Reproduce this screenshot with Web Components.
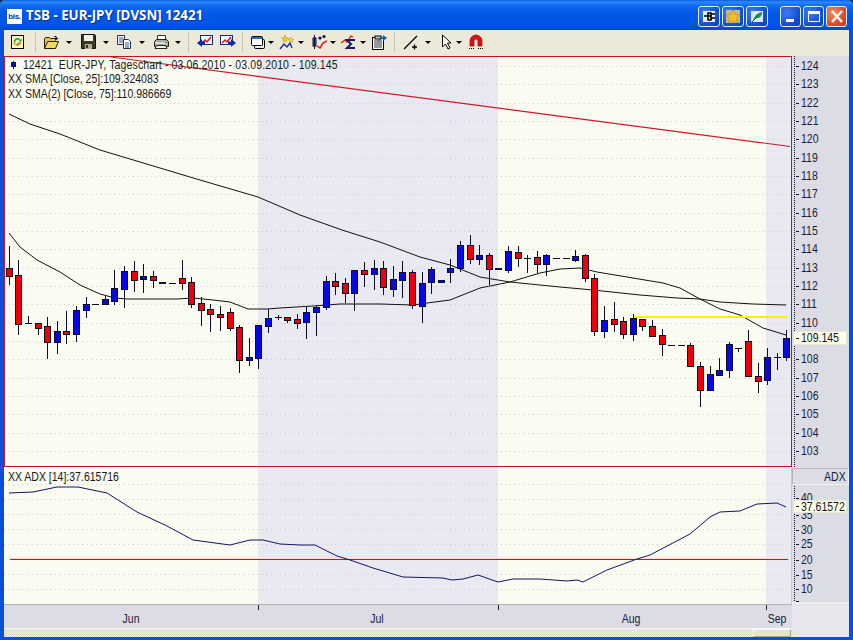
<!DOCTYPE html>
<html lang="de">
<head>
<meta charset="utf-8">
<title>TSB - EUR-JPY</title>
<style>
html,body{margin:0;padding:0;background:#1c2a44;height:100%;overflow:hidden}
</style>
</head>
<body>
<xp-window>
  <title-bar slot="title">
    <span slot="logo">bis.</span>
    TSB - EUR-JPY [DVSN] 12421
  </title-bar>
  <tool-bar slot="tools">
    <tool-btn icon="refresh" style="margin-left:5px"></tool-btn>
    <tool-sep style="margin-left:9px"></tool-sep>
    <tool-btn icon="folder" w="18" style="margin-left:7px"></tool-btn>
    <tool-caret style="margin-left:5px"></tool-caret>
    <tool-btn icon="save" w="15" style="margin-left:9px"></tool-btn>
    <tool-caret style="margin-left:7px"></tool-caret>
    <tool-btn icon="copy" style="margin-left:7px"></tool-btn>
    <tool-caret style="margin-left:7px"></tool-caret>
    <tool-btn icon="print" style="margin-left:8px"></tool-btn>
    <tool-caret style="margin-left:6px"></tool-caret>
    <tool-sep style="margin-left:7px"></tool-sep>
    <tool-btn icon="chartl" style="margin-left:8px"></tool-btn>
    <tool-btn icon="chartr" style="margin-left:7px"></tool-btn>
    <tool-sep style="margin-left:6px"></tool-sep>
    <tool-btn icon="win" style="margin-left:7px"></tool-btn>
    <tool-caret style="margin-left:2px"></tool-caret>
    <tool-btn icon="stars" style="margin-left:5px"></tool-btn>
    <tool-caret style="margin-left:3px"></tool-caret>
    <tool-btn icon="candles" style="margin-left:7px"></tool-btn>
    <tool-caret style="margin-left:3px"></tool-caret>
    <tool-btn icon="sigma" style="margin-left:5px"></tool-btn>
    <tool-caret style="margin-left:3px"></tool-caret>
    <tool-btn icon="notes" style="margin-left:5px"></tool-btn>
    <tool-sep style="margin-left:7px"></tool-sep>
    <tool-btn icon="line" style="margin-left:8px"></tool-btn>
    <tool-caret style="margin-left:6px"></tool-caret>
    <tool-btn icon="cursor" w="12" style="margin-left:10px"></tool-btn>
    <tool-caret style="margin-left:3px"></tool-caret>
    <tool-btn icon="magnet" style="margin-left:6px"></tool-btn>
  </tool-bar>
  <price-pane slot="main">
    <div class="first">12421  EUR-JPY, Tageschart - 03.06.2010 - 03.09.2010 - 109.145</div>
    <div>XX SMA [Close, 25]:109.324083</div>
    <div>XX SMA(2) [Close, 75]:110.986669</div>
  </price-pane>
  <price-axis slot="axis"></price-axis>
  <adx-pane slot="adx"><div>XX ADX [14]:37.615716</div></adx-pane>
  <adx-axis slot="adxaxis"></adx-axis>
  <time-axis slot="time"></time-axis>
  <h-scroll slot="scroll"></h-scroll>
</xp-window>

<script>
const FONT = '"Liberation Sans",Arial,sans-serif';
const BG = '#fbfcf1', SHADE = '#e9e9f1', AXIS = '#dcdce4', INK = '#1a1a40', SX = .875;
const shell = (el, html) => { el.attachShadow({mode:'open'}).innerHTML = html; };

/* Price data: wick top, wick bottom, body top, body bottom, colour (pixel rows of the chart) */
const C = [
[246,285,268,276,'r'],[260,335,275,324,'r'],[316,324,323,323,'l'],[323,335,323,328,'r'],[317,359,326,342,'r'],
[321,354,331,342,'b'],[311,344,331,334,'r'],[306,342,310,334,'b'],[297,318,304,310,'b'],[304,304,304,304,'l'],
[296,304,299,304,'b'],[270,305,288,301,'b'],[266,308,271,289,'b'],[261,292,271,280,'r'],[264,293,276,279,'b'],
[271,288,276,280,'r'],[282,283,282,283,'t'],[283,283,283,283,'l'],[260,290,278,283,'r'],[277,308,282,304,'r'],
[297,326,303,310,'r'],[304,332,309,314,'r'],[306,331,314,317,'r'],[308,331,312,328,'r'],[325,373,327,360,'r'],
[338,366,357,360,'b'],[325,369,325,358,'b'],[309,333,318,326,'b'],[315,320,317,317,'l'],[317,323,317,320,'r'],
[314,329,319,323,'r'],[306,339,312,322,'b'],[306,336,307,312,'b'],[276,310,281,307,'b'],[273,295,281,286,'r'],
[278,303,283,293,'r'],[270,311,270,293,'b'],[262,287,270,274,'r'],[260,290,268,274,'b'],[261,295,268,287,'r'],
[266,297,279,289,'b'],[261,298,272,280,'b'],[270,309,272,305,'r'],[272,323,283,306,'b'],[267,294,269,282,'b'],
[280,282,280,282,'b'],[259,283,268,272,'b'],[241,272,245,268,'b'],[235,264,245,259,'r'],[245,265,255,259,'b'],
[253,285,255,269,'r'],[268,269,268,269,'t'],[246,273,251,270,'b'],[246,267,252,258,'r'],[255,273,258,258,'l'],
[251,273,257,264,'r'],[254,276,255,264,'b'],[258,258,258,258,'l'],[258,258,258,258,'l'],[250,262,256,260,'b'],
[254,282,255,278,'r'],[274,336,278,331,'r'],[306,338,320,331,'b'],[302,332,319,324,'r'],[317,339,321,334,'r'],
[314,341,318,334,'b'],[319,331,319,326,'r'],[320,337,326,336,'r'],[329,356,335,344,'r'],[345,345,345,345,'l'],
[345,345,345,345,'l'],[343,367,345,366,'r'],[362,407,366,390,'r'],[366,391,374,390,'b'],[358,376,370,375,'b'],
[342,378,344,370,'b'],[348,352,348,348,'l'],[330,377,341,376,'r'],[363,393,376,381,'r'],[348,385,357,380,'b'],
[353,370,357,357,'l'],[330,361,338,357,'b']];
const SMA25 = [[9,233],[20,247],[37,260],[60,272],[80,285],[100,294],[115,298],[128,299],[140,299],[177,299],[193,298],[213,300],[230,302],[248,309],[267,309],[280,308],[313,306],[340,304],[380,304],[413,305],[427,303],[450,300],[480,288],[510,282],[540,273],[560,269],[580,268],[597,272],[633,278],[663,283],[680,288],[700,299],[720,309],[740,315],[763,328],[786,335]];
const SMA75 = [[9,114],[30,124],[60,134],[100,150],[150,165],[200,180],[258,197],[300,215],[342,230],[380,242],[420,257],[450,265],[480,277],[510,282],[560,287],[593,290],[640,295],[677,298],[700,299],[720,302],[753,304],[786,305]];
const ADX = [[9,493],[33,492],[57,487],[78,487],[107,493],[137,512],[167,526],[193,540],[230,545],[250,540],[263,540],[280,544],[300,545],[315,545],[337,556],[350,560],[373,568],[403,577],[443,578],[452,580],[463,579],[478,575],[498,582],[513,579],[540,579],[567,581],[577,580],[583,582],[607,570],[637,559],[650,555],[690,534],[710,517],[720,512],[740,511],[757,504],[777,503],[786,507]];
const pts = a => a.map(p => p.join(',')).join(' ');
const bands = (y, h) => `<rect x="258" y="${y}" width="240" height="${h}" fill="${SHADE}"/><rect x="766" y="${y}" width="26" height="${h}" fill="${SHADE}"/>`;
const dots = (y, x2=792) => `<line x1="4" x2="${x2}" y1="${y}.5" y2="${y}.5" stroke="#c9c9c2" stroke-dasharray="1 3.6"/>`;
const label = (x, y, t, anchor='start') => `<text transform="translate(${x} ${y}) scale(${SX} 1)" text-anchor="${anchor}">${t}</text>`;

function candles(){
  let s = '';
  C.forEach((c,i) => {
    const x = Math.floor(9.3 + 9.6*i), [wt,wb,bt,bb,k] = c, ink = '#0c0c24';
    if (wb > wt) s += `<rect x="${x}" y="${wt}" width="1" height="${wb-wt}" fill="${ink}"/>`;
    if (k === 'l') s += `<rect x="${x-3}" y="${bt}" width="7" height="1" fill="${ink}"/>`;
    else if (k === 't') s += `<rect x="${x-3}" y="${bt}" width="7" height="2" fill="#101040"/>`;
    else s += `<rect x="${x-3}" y="${bt}" width="7" height="${bb-bt+1}" fill="${ink}"/><rect x="${x-2}" y="${bt+1}" width="5" height="${Math.max(bb-bt-1,0)}" fill="${k==='r'?'#ee0008':'#0808e0'}"/>`;
  });
  return s;
}

class XpWindow extends HTMLElement{constructor(){super();shell(this,`<style>
:host{display:grid;box-sizing:border-box;width:853px;height:640px;grid-template-columns:788px 57px;grid-template-rows:30px 26px 411px 137px 24px 9px;
padding:0 4px 3px 4px;background:#0a4fd8;border-radius:5px 5px 0 0;overflow:hidden;font-family:${FONT}}
.t{grid-column:1/3;margin:0 -4px}.b{grid-column:1/3}
.r{grid-column:2;grid-row:5/7;background:#e6e6ec}
</style>
<div class="t"><slot name="title"></slot></div>
<div class="b"><slot name="tools"></slot></div>
<slot name="main"></slot><slot name="axis"></slot>
<slot name="adx"></slot><slot name="adxaxis"></slot>
<slot name="time"></slot><div class="r"></div>
<slot name="scroll"></slot>`);}}

class TitleBar extends HTMLElement{constructor(){super();
shell(this,`<style>
:host{display:flex;align-items:center;height:30px;padding:2px 6px 0 7px;box-sizing:border-box;
background:linear-gradient(#0d5fe4 0,#2b8af6 2px,#0f68ee 6px,#0058e6 45%,#0056e0 85%,#0048c8 100%);
color:#fff;font:bold 13.300px/1 "Open Sans","Liberation Sans",sans-serif;text-shadow:1px 1px 0 #0a2f9c}
.logo{width:15px;height:15px;background:#fff;margin-right:4px;color:#1030a0;font:bold 8px/15px ${FONT};text-align:center;text-shadow:none;letter-spacing:-.3px;overflow:hidden}
.txt{flex:1;white-space:nowrap}
.cb{box-sizing:border-box;display:flex;align-items:center;justify-content:center;width:21px;height:21px;border:1px solid #e4ecff;border-radius:3px;background:radial-gradient(circle at 30% 30%,#3f7df4,#0c48d0 75%);margin-left:2px}
.cu{width:22px}
.cb svg{width:18px;height:17px;display:block}
.gap{margin-left:12px}
.close{background:radial-gradient(circle at 30% 30%,#ee8a60,#d8401c 75%)}
</style>
<span class="logo"><slot name="logo"></slot></span><span class="txt"><slot></slot></span>
<span class="cb cu"><svg viewBox="0 0 18 17"><rect x="3" y="3" width="12" height="11" fill="#e8eefc"/><path d="M4 8h4M8 5v7h3V5zM11 6h4M11 10h4M8 8h3" stroke="#000" stroke-width="1.6" fill="none"/></svg></span>
<span class="cb cu"><svg viewBox="0 0 18 17"><rect x="2" y="2" width="14" height="13" fill="#c4b888"/><path d="M9 2l2.2 4.4 4.8.6-3.5 3.3.9 4.7L9 12.7 4.600 15l.9-4.700L2 7l4.800-.6z" fill="#f4c020" stroke="#b88010" stroke-width=".6"/></svg></span>
<span class="cb cu"><svg viewBox="0 0 18 17"><rect x="3" y="3" width="12" height="11" fill="#dce8fa"/><path d="M5 13C6 8 9 5 14 4c0 4-2 6-5 6l-2 1z" fill="#1c8c48"/><path d="M4 14l5-5" stroke="#063" /></svg></span>
<span class="cb gap"><svg viewBox="0 0 18 17"><rect x="4" y="11" width="8" height="3" fill="#fff"/></svg></span>
<span class="cb"><svg viewBox="0 0 18 17"><rect x="3.500" y="3.500" width="11" height="10" fill="none" stroke="#fff"/><rect x="3" y="3" width="12" height="3" fill="#fff"/></svg></span>
<span class="cb close"><svg viewBox="0 0 18 17"><path d="M4 3l10 11M14 3L4 14" stroke="#fff" stroke-width="2.400"/></svg></span>`);
}}

class ToolBar extends HTMLElement{constructor(){super();shell(this,`<style>
:host{display:flex;align-items:center;height:26px;background:#ece9d8;box-sizing:border-box;padding:0 0 2px 1px}
</style><slot></slot>`);}}

const ICONS = {
refresh:`<rect x="1.500" y="1.500" width="12" height="13" fill="#fdf8c0" stroke="#000"/><path d="M4.500 8a3 3 0 0 1 5-2.400" stroke="#109030" stroke-width="1.500" fill="none"/><path d="M8.500 7.500h3v-3zM10.500 8a3 3 0 0 1-5 2.400" fill="#109030"/><path d="M10.500 8a3 3 0 0 1-5 2.400" stroke="#d0a020" stroke-width="1.500" fill="none"/><path d="M6.500 8.500h-3v3z" fill="#d0a020"/>`,
folder:`<path d="M1.500 14.500v-10l1-1h4l1 1h5v2" fill="#e8c450" stroke="#202000"/><path d="M1.500 14.500l3-7h11l-3 7z" fill="#f4d668" stroke="#202000"/><path d="M10 3c2-2 4-1 4 1l1.500 0-2 2-2-2h1.200c0-1-1-1.500-2.700-1z" fill="#000"/>`,
save:`<path d="M.5 .5h13l1 1v13H.5z" fill="#3a3a22" stroke="#101008"/><rect x="3" y="1" width="9" height="6" fill="#f4f2e6"/><rect x="4" y="10" width="7" height="5" fill="#b0ae9a"/><rect x="5" y="11" width="2" height="3" fill="#303020"/>`,
copy:`<path d="M1.500 1.500h7v9h-7z" fill="#f6f8fc" stroke="#203050"/><path d="M3 4h4M3 6h4M3 8h4" stroke="#405080"/><path d="M7.500 5.500h5l2 2v7h-7z" fill="#fff" stroke="#203050"/><path d="M9 9h4M9 11h4M9 13h4" stroke="#3050a0"/>`,
print:`<path d="M4.500 1.500h8v5h-8z" fill="#fff" stroke="#303030"/><path d="M1.500 7.500l2-2h10l2 2v5h-14z" fill="#a8a8a0" stroke="#202020"/><path d="M2 9h12" stroke="#e8e8e0" stroke-width="1.500"/><path d="M3.500 11.500h9l1.500 3h-12z" fill="#f4f4f0" stroke="#202020"/><rect x="12" y="8" width="2" height="1" fill="#30a030"/>`,
chartl:`<rect x="3.500" y="1.500" width="12" height="9" fill="#fff" stroke="#102c80"/><path d="M5 9l3-3 2 2 4-5" stroke="#e01010" stroke-width="1.500" fill="none"/><path d="M0 9l5-4v2.500h3v3H5V13z" fill="#0a2cb0"/>`,
chartr:`<rect x=".5" y="1.500" width="12" height="9" fill="#fff" stroke="#102c80"/><path d="M2 9l3-3 2 2 4-5" stroke="#e01010" stroke-width="1.500" fill="none"/><path d="M16 9l-5-4v2.500H8v3h3V13z" fill="#0a2cb0"/>`,
win:`<rect x="4.500" y="5.500" width="10" height="9" rx="1" fill="#e8e8e4" stroke="#000"/><rect x="1.500" y="2.500" width="11" height="9" rx="1" fill="#fff" stroke="#000"/><rect x="2" y="3" width="10" height="2" fill="#2c6ccc"/>`,
stars:`<path d="M6 1l1 2.500 2.500.5-2 1.500.5 2.500-2-1.200L4 8l.5-2.500-2-1.500L5 3.500z" fill="#f0d020" stroke="#a89010" stroke-width=".5"/><path d="M12 3l.8 2 2 .3-1.500 1.200.4 2-1.700-1-1.700 1 .4-2L9 5.300l2-.3z" fill="#f4e060" stroke="#a89010" stroke-width=".5"/><path d="M1 15l4-5 3 3 3-4 2 5" stroke="#1020a0" stroke-width="1.300" fill="none"/>`,
candles:`<rect x="2" y="4" width="3" height="8" fill="#c04040" stroke="#101040"/><path d="M3.500 1v14" stroke="#101040"/><circle cx="9" cy="4" r="1.600" fill="#101040"/><circle cx="13" cy="2.500" r="1.600" fill="#101040"/><path d="M6 12l3 2 3-5 4-2" stroke="#e01818" stroke-width="1.500" fill="none"/>`,
sigma:`<path d="M0 9l4-3 2 2 4-6 2 1" stroke="#e01010" stroke-width="1.300" fill="none"/><path d="M14 6H6l4 4-4 4h8" stroke="#102060" stroke-width="2" fill="none"/>`,
notes:`<rect x="1.500" y="3.500" width="11" height="12" fill="#fff" stroke="#000"/><rect x="4" y="2" width="6" height="3" fill="#d0d0c0" stroke="#000"/><path d="M3 7h8M3 9h8M3 11h8M3 13h8" stroke="#303030"/><path d="M7 8c0-4 3-5 5-5V1l4 3-4 3V5c-2 0-4 1-5 3z" fill="#1060b0"/>`,
line:`<path d="M1 15L14 2" stroke="#000" stroke-width="1.200"/><path d="M9 13h5M11.500 10.500v5" stroke="#000" stroke-width="1.300"/>`,
cursor:`<path d="M1.500 1v12l3-3 2.500 5 2-1-2.500-5H10z" fill="#fff" stroke="#000"/>`,
magnet:`<path d="M2 12V7a6 6 0 0 1 12 0v5h-4V7a2 2 0 0 0-4 0v5z" fill="#e01010" stroke="#800808" stroke-width=".7"/><path d="M1 14.500h5M10 14.500h5" stroke="#000" stroke-dasharray="1 1"/>`
};
class ToolBtn extends HTMLElement{constructor(){super();
const w=this.getAttribute('w')||16, name=this.getAttribute('icon');
shell(this,`<style>:host{display:block;flex:none;width:${w}px;height:16px}svg{display:block;width:100%;height:100%}</style>
<svg viewBox="0 0 ${w} 16">${ICONS[name]||''}</svg>`);}}
class ToolCaret extends HTMLElement{constructor(){super();shell(this,`<style>:host{display:block;flex:none;width:0;height:0;border:3px solid transparent;border-top:3px solid #000;border-bottom:0;margin-top:1px}</style>`);}}
class ToolSep extends HTMLElement{constructor(){super();shell(this,`<style>:host{display:block;flex:none;width:1px;height:20px;background:#c4c1b0}</style>`);}}

class PricePane extends HTMLElement{constructor(){super();
let g='';for(let k=0;k<22;k++)g+=dots(Math.round(66+k*18.33));
shell(this,`<style>
:host{display:block;position:relative;width:788px;height:411px;box-sizing:border-box;overflow:hidden;background:${BG}}
svg{position:absolute;inset:0;display:block}
.leg{position:absolute;left:4px;top:2px;font:12px/14.300px ${FONT};color:#181818;transform:scaleX(${SX});transform-origin:0 0}
::slotted(div){height:14.300px;white-space:nowrap}
::slotted(.first){padding-left:17px;white-space:pre;letter-spacing:.15px}
.f{position:absolute;inset:0;border:1px solid #d0101c;box-sizing:border-box}
</style>
<svg width="788" height="411" viewBox="4 56 788 411">
${bands(56,411)}${g}
<polyline points="${pts(SMA75)}" fill="none" stroke="#111"/>
<polyline points="${pts(SMA25)}" fill="none" stroke="#111"/>
<g shape-rendering="crispEdges">${candles()}
<rect x="634" y="316" width="153" height="2" fill="#fff000"/></g>
<polyline points="111,57 790,146.500" fill="none" stroke="#d01828" stroke-width="1.100"/>
<g shape-rendering="crispEdges"><rect x="13" y="61" width="1" height="8" fill="#101050"/><rect x="11" y="62" width="5" height="5" fill="#101080"/><rect x="423" y="56" width="5" height="1" fill="#201010"/></g>
</svg>
<div class="leg"><slot></slot></div><div class="f"></div>`);
}}

class AdxPane extends HTMLElement{constructor(){super();
let g='';for(let k=0;k<8;k++){const y=484+k*15; if(y!==559) g+=dots(y,790);}
shell(this,`<style>
:host{display:block;position:relative;width:788px;height:137px;overflow:hidden;background:${BG}}
svg{position:absolute;inset:0;display:block}
.leg{position:absolute;left:4px;top:3px;font:12px/14px ${FONT};color:#181818;white-space:nowrap;transform:scaleX(${SX});transform-origin:0 0}
.s{position:absolute;right:0;top:0;bottom:0;width:1px;background:#c8c8d0}
</style>
<svg width="788" height="137" viewBox="4 467 788 137">
${bands(467,137)}${g}
<g shape-rendering="crispEdges"><rect x="10" y="558" width="778" height="1" fill="#f6dcdc"/><rect x="10" y="559" width="778" height="1" fill="#f00010"/></g>
<polyline points="${pts(ADX)}" fill="none" stroke="#141460"/>
</svg><div class="leg"><slot></slot></div><div class="s"></div>`);}}

const axisText=(y,t)=>`<rect x="4" y="${y}" width="3" height="1" fill="#101030"/>${label(9,y+4,t)}`;
const TAG=`position:absolute;left:1px;width:54px;box-sizing:border-box;background:#ffffe6;border:1px solid #e8e8d8;color:#101028;font:12px ${FONT};display:flex;align-items:center;padding-left:2px;overflow:hidden`;
class PriceAxis extends HTMLElement{constructor(){super();
let s='';for(let p=124;p>=103;p--){s+=axisText(Math.round(10+(124-p)*18.33),p);}
shell(this,`<style>
:host{display:block;position:relative;width:57px;height:411px;background:${AXIS};overflow:hidden}
svg{position:absolute;inset:0;display:block;font:12px ${FONT};fill:${INK}}
.tag{${TAG};top:275px;height:14px}
.tag i{flex:none;width:3px;height:1px;background:#101028;margin-right:2px}
.tag span{display:block;transform:scaleX(${SX});transform-origin:0 50%;white-space:nowrap}
</style>
<svg width="57" height="411"><line x1="2.500" x2="2.500" y1="0" y2="411" stroke="#101030" stroke-dasharray="1 1"/>${s}</svg>
<div class="tag"><i></i><span>109.145</span></div>`);}}

class AdxAxis extends HTMLElement{constructor(){super();
const L=[[40,31],[35,48],[30,63],[25,77],[20,93],[15,108],[10,122]];
let s='';L.forEach(([v,y])=>s+=axisText(y,v));
shell(this,`<style>
:host{display:block;position:relative;width:57px;height:137px;background:${AXIS};overflow:hidden}
.box{height:17px;margin-top:1px;box-sizing:border-box;border:1px solid #b8b8c0;border-right-color:#eee;border-bottom-color:#f2f2f6;font:12px/16px ${FONT};color:${INK};text-align:right;padding-right:2px}
.box span{display:inline-block;transform:scaleX(${SX});transform-origin:100% 50%}
svg{position:absolute;left:0;top:0;display:block;font:12px ${FONT};fill:${INK}}
.w{position:absolute;left:0;right:0;top:135px;height:2px;background:#eeeef2}
.tag{${TAG};top:33px;height:13px}
.tag i{flex:none;width:3px;height:1px;background:#101028;margin-right:2px}
.tag span{display:block;transform:scaleX(${SX});transform-origin:0 50%;white-space:nowrap}
</style>
<svg width="57" height="137"><line x1="2.500" x2="2.500" y1="19" y2="135" stroke="#101030" stroke-dasharray="1 1"/><rect x="4" y="134" width="3" height="1" fill="#101030"/>${s}</svg>
<div class="box"><span>ADX</span></div><div class="w"></div>
<div class="tag"><i></i><span>37.61572</span></div>`);}}

class TimeAxis extends HTMLElement{constructor(){super();
const lab=[['Jun',131],['Jul',377],['Aug',631],['Sep',777]];
shell(this,`<style>
:host{display:block;position:relative;width:788px;height:24px;background:${AXIS};border-top:1px solid #b4b4b4;box-sizing:border-box}
svg{display:block;font:12px ${FONT};fill:${INK}}
</style>
<svg width="788" height="23" viewBox="4 605 788 23">
<g shape-rendering="crispEdges" fill="#202030"><rect x="258" y="605" width="1" height="5"/><rect x="498" y="605" width="1" height="5"/><rect x="766" y="605" width="1" height="5"/></g>
${lab.map(([t,x])=>label(x,623,t,'middle')).join('')}
</svg>`);}}

class HScroll extends HTMLElement{constructor(){super();shell(this,`<style>
:host{display:flex;width:788px;height:9px;box-sizing:border-box;border-top:1px solid #f6f6f6;background:repeating-conic-gradient(#d6d4cc 0 25%,#f4f3ee 0 50%) 0 0/2px 2px;justify-content:flex-end}
.th{width:38px;box-sizing:border-box;background:#e4e2d4;border:1px solid #f8f8f4;border-right-color:#a8a698;border-bottom-color:#a8a698;margin-right:1px}
</style><div class="th"></div>`);}}

customElements.define('xp-window',XpWindow);
customElements.define('title-bar',TitleBar);
customElements.define('tool-bar',ToolBar);
customElements.define('tool-btn',ToolBtn);
customElements.define('tool-caret',ToolCaret);
customElements.define('tool-sep',ToolSep);
customElements.define('price-pane',PricePane);
customElements.define('adx-pane',AdxPane);
customElements.define('price-axis',PriceAxis);
customElements.define('adx-axis',AdxAxis);
customElements.define('time-axis',TimeAxis);
customElements.define('h-scroll',HScroll);
</script>
</body>
</html>
